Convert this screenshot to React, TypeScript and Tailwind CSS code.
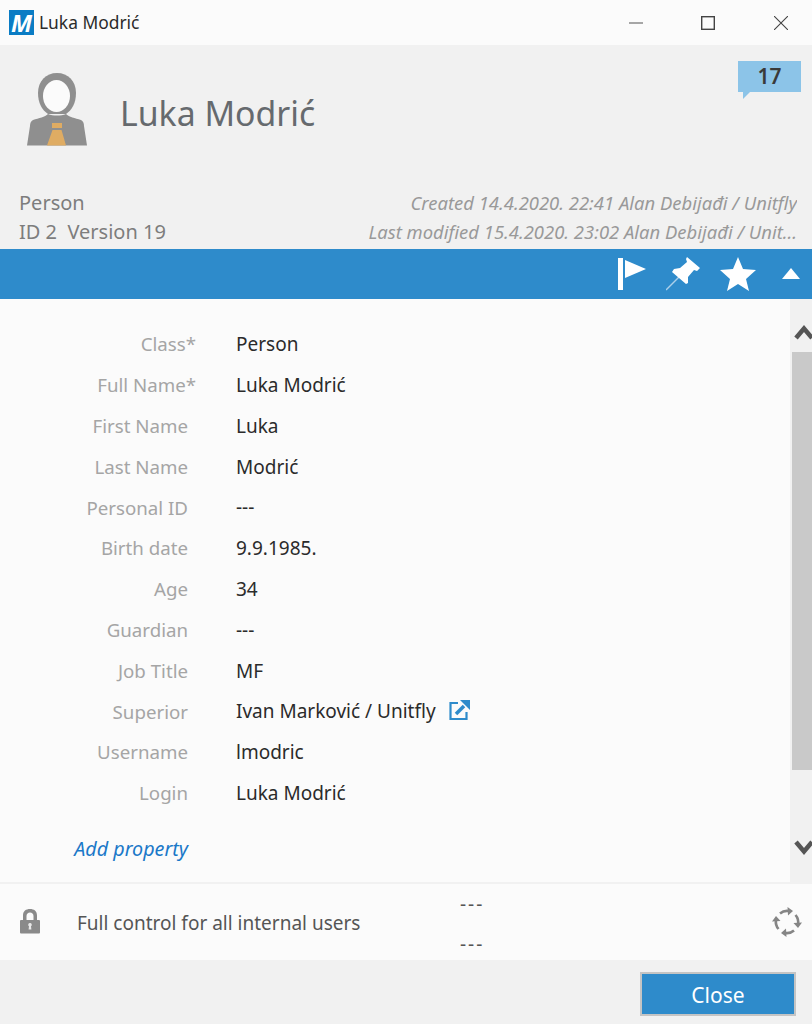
const FONT = "font-['Noto_Sans','Open_Sans',sans-serif]";

const properties = [
  { label: "Class", required: true, value: "Person" },
  { label: "Full Name", required: true, value: "Luka Modrić" },
  { label: "First Name", value: "Luka" },
  { label: "Last Name", value: "Modrić" },
  { label: "Personal ID", value: "---" },
  { label: "Birth date", value: "9.9.1985." },
  { label: "Age", value: "34" },
  { label: "Guardian", value: "---" },
  { label: "Job Title", value: "MF" },
  { label: "Superior", value: "Ivan Marković / Unitfly", link: true },
  { label: "Username", value: "lmodric" },
  { label: "Login", value: "Luka Modrić" },
];

function PersonIcon() {
  return (
    <svg width="60" height="73" viewBox="0 0 60 73" className="shrink-0">
      <path d="M30 0C19 0 11 8 11 20c0 10 4 17 10 21h18c6-4 10-11 10-21C49 8 41 0 30 0z" fill="#8f8f8f" />
      <ellipse cx="29.500" cy="23" rx="13.500" ry="16" fill="#fbfbfb" />
      <path d="M6 47c6-2 12-3 15-6 5 2 13 2 18 0 3 3 9 4 15 6 2 1 3 3 3 6l3 19.500H0l3-19.500c0-3 1-5 3-6z" fill="#8f8f8f" />
      <path d="M25 50h10v5H25zM25.500 57h9L39 72.500H20z" fill="#dfac63" />
    </svg>
  );
}

function LockIcon() {
  return (
    <svg width="22" height="26" viewBox="0 0 22 26">
      <path d="M4 13V7.500C4 3 7 1 11 1s7 2 7 6.500V13h-3.500V8c0-2-1.500-3.500-3.500-3.500S7.500 6 7.500 8v5z" fill="#8a8a8a" />
      <rect x="1" y="12" width="20" height="13.500" rx="1" fill="#8a8a8a" />
      <path d="M11 15a1.800 1.800 0 0 1 1 3.300l.4 3.200H9.600l.4-3.200A1.800 1.800 0 0 1 11 15z" fill="#e8e8e8" />
    </svg>
  );
}

function SyncIcon() {
  return (
    <svg width="30" height="30" viewBox="0 0 30 30" fill="none" stroke="#858585" strokeWidth="2.600">
      <path d="M8 6.500A11 11 0 0 1 17 4" />
      <path d="M23.500 8A11 11 0 0 1 26 17" />
      <path d="M22 23.500A11 11 0 0 1 13 26" />
      <path d="M6.500 22A11 11 0 0 1 4 13" />
      <path d="M15.500 0l5.500 4-5 4.500zM30 15.500l-4 5.500-4.500-5zM14.500 30L9 26l5-4.500zM0 14.500L4 9l4.500 5z" fill="#858585" stroke="none" />
    </svg>
  );
}

export default function App() {
  return (
    <div className={`${FONT} w-[812px] h-[1024px] flex flex-col bg-[#f1f1f1] overflow-hidden`}>
      {/* title bar */}
      <div className="h-[45px] shrink-0 bg-[#fbfbfb] flex items-center pl-[9px]">
        <div className="w-[25px] h-[25px] bg-[#0a7cc4] flex items-center justify-center text-white font-bold italic text-[24px] leading-none">
          M
        </div>
        <span className="ml-[5px] text-[17.400px] text-[#2b2b2b]">Luka Modrić</span>
        <div className="ml-auto flex items-center">
          <svg width="14" height="14" viewBox="0 0 14 14" className="mr-[58px]">
            <path d="M0 7h14" stroke="#8a8a8a" strokeWidth="1.500" />
          </svg>
          <svg width="14" height="14" viewBox="0 0 14 14" className="mr-[59px]">
            <rect x="0.700" y="0.700" width="12.600" height="12.600" fill="none" stroke="#444" strokeWidth="1.400" />
          </svg>
          <svg width="14" height="14" viewBox="0 0 14 14" className="mr-[24px]">
            <path d="M0 0l14 14M14 0L0 14" stroke="#444" strokeWidth="1.100" />
          </svg>
        </div>
      </div>

      {/* header */}
      <div className="h-[204px] shrink-0 bg-[#f1f1f1] flex flex-col">
        <div className="h-[143px] flex items-start">
          <div className="ml-[27px] mt-[28px]">
            <PersonIcon />
          </div>
          <span className="ml-[33px] mt-[44px] text-[33.800px] leading-[48px] text-[#666a6e]">Luka Modrić</span>
          <div className="relative ml-auto mr-[11px] mt-[16px] w-[63px] h-[31px] pt-[1px] bg-[#8cc4e8] flex items-center justify-center text-[21px] font-semibold text-[#3a3a3a]">
            17
            <span className="absolute left-[5px] top-[31px] w-0 h-0 border-t-[7px] border-t-[#8cc4e8] border-r-[7px] border-r-transparent" />
          </div>
        </div>
        <div className="flex justify-between pl-[19px] pr-[15px]">
          <div className="text-[20px] leading-[29px] text-[#7d7d7d]">
            <div>Person</div>
            <div>ID 2&nbsp; Version 19</div>
          </div>
          <div className="w-[440px] text-right italic text-[18.450px] leading-[29px] text-[#999]">
            <div className="truncate">Created 14.4.2020. 22:41 Alan Debijađi / Unitfly</div>
            <div className="truncate">Last modified 15.4.2020. 23:02 Alan Debijađi / Unit...</div>
          </div>
        </div>
      </div>

      {/* toolbar */}
      <div className="h-[50px] shrink-0 bg-[#2e8bcb] flex items-center justify-end">
        <svg width="30" height="34" viewBox="0 0 30 34" className="mr-[19px]" fill="white">
          <rect x="1" y="1" width="5" height="32" />
          <path d="M8 3l21 9L8 21z" />
        </svg>
        <svg width="36" height="36" viewBox="0 0 36 36" className="mr-[18px]" fill="white">
          <path d="M21 1l13 11-3 3-3-1-6 7v6l-2 1L6 16l2-3 6-1 7-6-1-3z" />
          <path d="M13 21L0 34" stroke="white" strokeWidth="1.500" opacity="0.6" />
        </svg>
        <svg width="36" height="34" viewBox="0 0 36 34" className="mr-[26px]" fill="white">
          <path d="M18 0l5 12 13 1-10 9 3 12-11-7-11 7 3-12L0 13l13-1z" />
        </svg>
        <svg width="18" height="12" viewBox="0 0 18 12" className="mr-[12px]" fill="white">
          <path d="M9 0l9 11H0z" />
        </svg>
      </div>

      {/* properties */}
      <div className="h-[583px] shrink-0 flex bg-[#fbfbfb]">
        <div className="flex-1 pt-[25px]">
          {properties.map((p) => (
            <div key={p.label} className="h-[40.800px] flex items-center text-[19px]">
              <div className="w-[188px] shrink-0 text-right text-[18.700px] text-[#a5a5a5]">
                {p.label}
                {p.required && <span className="mr-[-8px]">*</span>}
              </div>
              <div className="ml-[48px] flex items-center text-[#2b2b2b]">
                {p.value}
                {p.link && (
                  <svg width="22" height="22" viewBox="0 0 22 22" className="ml-[13px] mb-[4px]" fill="none">
                    <path d="M9 4H1.500v16h16v-7" stroke="#2e8bcb" strokeWidth="2.200" />
                    <path d="M7 15l8-8" stroke="#2e8bcb" strokeWidth="3.500" />
                    <path d="M11 1h10v10z" fill="#2e8bcb" />
                  </svg>
                )}
              </div>
            </div>
          ))}
          <div className="w-[188px] mt-[20px] text-right italic text-[19.700px] text-[#1a78c8]">Add property</div>
        </div>
        <div className="w-[22px] shrink-0 bg-[#f1f1f1] flex flex-col">
          <svg width="22" height="15" viewBox="0 0 22 15" className="mt-[26px]" fill="none">
            <path d="M6 13L14 3.500l8 9.500" stroke="#555" strokeWidth="4.500" />
          </svg>
          <div className="w-[20px] h-[418px] bg-[#c9c9c9] mt-[12px] ml-[2px]" />
          <svg width="22" height="15" viewBox="0 0 22 15" className="mt-[70px]" fill="none">
            <path d="M6 2L14 11.500 22 2" stroke="#555" strokeWidth="4.500" />
          </svg>
        </div>
      </div>

      {/* permissions */}
      <div className="h-[76px] mt-[2px] shrink-0 bg-[#fbfbfb] flex items-center text-[19px] text-[#555]">
        <div className="ml-[19px] w-[22px] mb-[2px]">
          <LockIcon />
        </div>
        <span className="ml-[36px] w-[383px] mt-[3px]">Full control for all internal users</span>
        <div className="flex flex-col gap-[15px] leading-[25px] mt-[5px] tracking-[2px]">
          <span>---</span>
          <span>---</span>
        </div>
        <div className="ml-auto mr-[10px]">
          <SyncIcon />
        </div>
      </div>

      {/* footer */}
      <div className="flex-1 flex items-start justify-end pt-[12px] pr-[16px]">
        <button
          type="button"
          className="w-[156px] h-[44px] pt-[3px] bg-[#2e8bcb] border-2 border-[#c4c4c4] text-white text-[21px]"
        >
          Close
        </button>
      </div>
    </div>
  );
}
